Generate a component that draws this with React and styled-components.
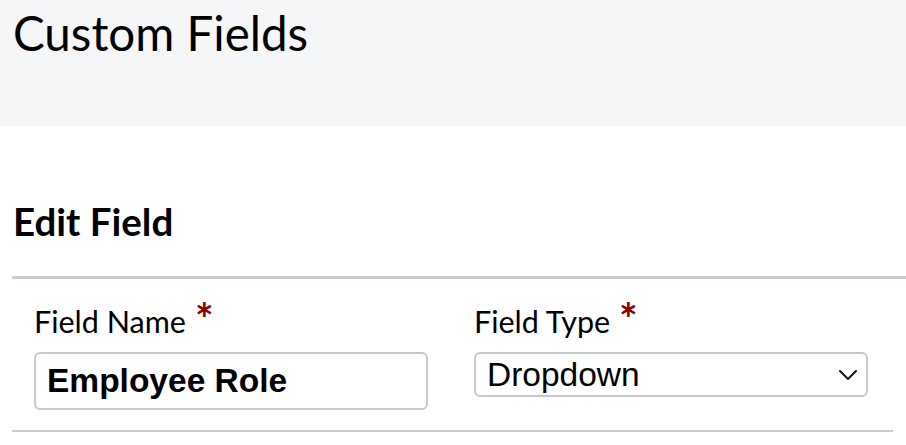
import React from "react";
import styled, { createGlobalStyle } from "styled-components";

const GlobalStyle = createGlobalStyle`
  * { box-sizing: border-box; }
  body {
    margin: 0;
    background: #fff;
    font-family: Lato, "Open Sans", sans-serif;
    color: #000;
  }
`;

const Header = styled.header`
  height: 126px;
  background-color: #f5f6f8;
  padding: 3px 13px 0;
`;

const PageTitle = styled.h1`
  margin: 0;
  font-size: 47.5px;
  font-weight: 400;
  line-height: 60px;
`;

const Section = styled.section`
  padding: 71px 13px 0 12px;
`;

const SectionTitle = styled.h2`
  margin: 0 -13px 0 0;
  padding: 0 0 31px 1px;
  font-size: 38.5px;
  font-weight: 700;
  line-height: 48px;
  border-bottom: 3px solid #c8cbd0;
`;

const FieldRow = styled.div`
  display: grid;
  grid-template-columns: 394px 394px;
  column-gap: 46px;
  padding: 24px 22px 20px;
  border-bottom: 2px solid #c8cbd0;
`;

const Field = styled.div`
  display: flex;
  flex-direction: column;
`;

const Label = styled.label`
  font-size: 30.5px;
  line-height: 36px;
  height: 49px;
  display: flex;
  align-items: flex-start;
`;

const Required = styled.span`
  color: #8b0000;
  font-weight: 700;
  font-size: 44px;
  line-height: 36px;
  margin-left: 9px;
  margin-top: -3px;
`;

const TextInput = styled.div`
  height: ${(p) => p.$h}px;
  border: 2px solid #c5c8ce;
  border-radius: 6px;
  display: flex;
  align-items: center;
  justify-content: space-between;
  padding: 0 8px 0 11px;
  font-family: "Liberation Sans", Arial, sans-serif;
  font-size: 33.5px;
  font-weight: ${(p) => (p.$bold ? 700 : 400)};
  color: #000;
`;

const Chevron = () => (
  <svg width="20" height="12" viewBox="0 0 20 12" fill="none">
    <path d="M2 2l8 8 8-8" stroke="#111" strokeWidth="2" strokeLinecap="round" strokeLinejoin="round" />
  </svg>
);

export default function App() {
  return (
    <>
      <GlobalStyle />
      <Header>
        <PageTitle>Custom Fields</PageTitle>
      </Header>
      <Section>
        <SectionTitle>Edit Field</SectionTitle>
        <FieldRow>
          <Field>
            <Label>
              Field Name<Required>*</Required>
            </Label>
            <TextInput $h={58} $bold>
              Employee Role
            </TextInput>
          </Field>
          <Field>
            <Label>
              Field Type<Required>*</Required>
            </Label>
            <TextInput $h={45}>
              Dropdown
              <Chevron />
            </TextInput>
          </Field>
        </FieldRow>
      </Section>
    </>
  );
}
